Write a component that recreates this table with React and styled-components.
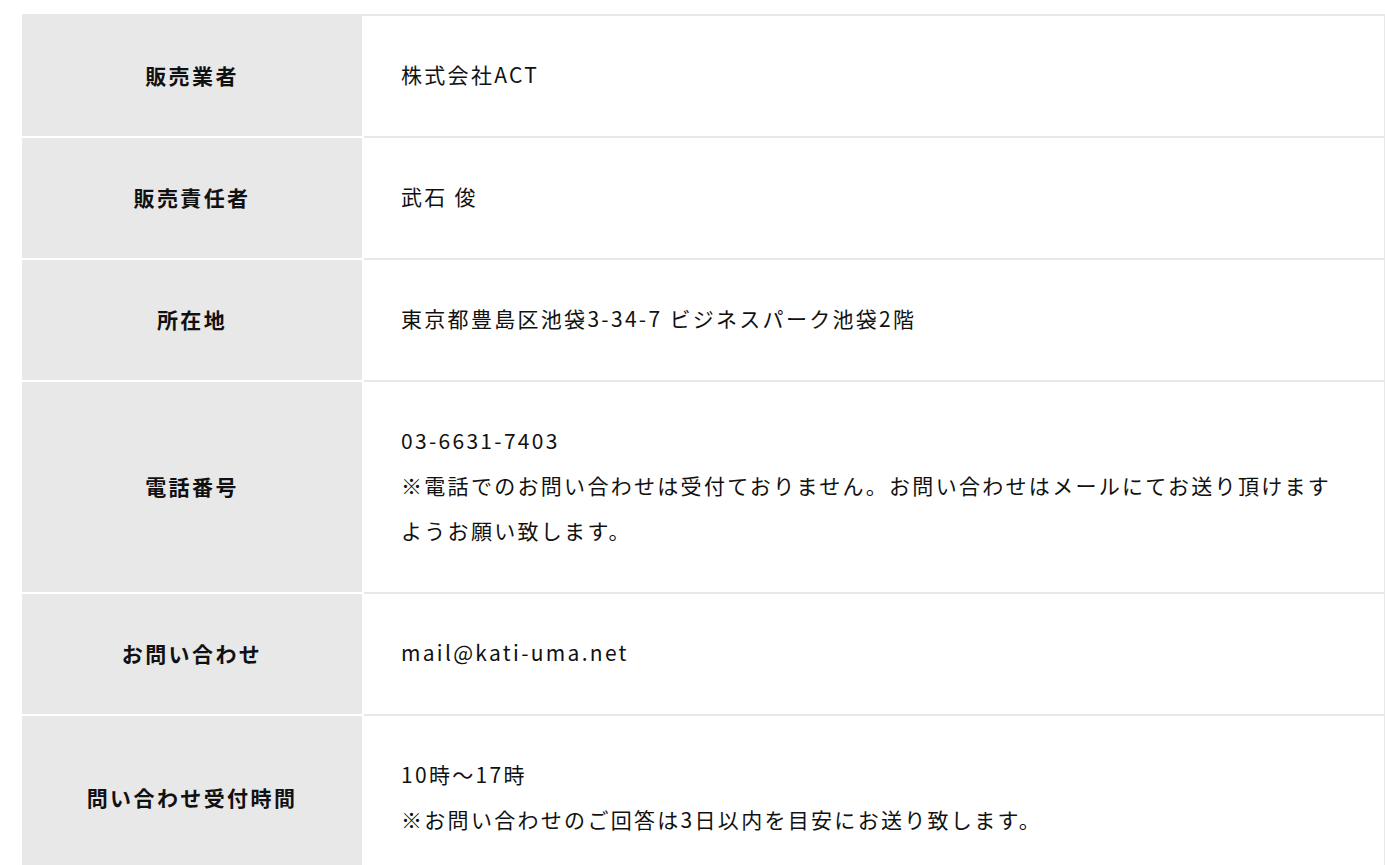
import React from 'react';
import styled, { createGlobalStyle } from 'styled-components';

const GlobalStyle = createGlobalStyle`
  html, body {
    margin: 0;
    padding: 0;
    background: #fff;
  }
  body {
    font-family: "Noto Sans CJK JP", "Noto Sans", sans-serif;
    color: #111;
  }
`;

const Page = styled.div`
  padding: 14px 0 0 22px;
`;

const Table = styled.div`
  width: 1363px;
  border-top: 2px solid #e8e8e8;
`;

const Row = styled.div`
  display: grid;
  grid-template-columns: 342px 1fr;
`;

const Head = styled.div`
  display: flex;
  align-items: center;
  justify-content: center;
  padding-bottom: 3px;
  background: #e8e8e8;
  border-right: 2px solid #fff;
  border-bottom: 2px solid #fff;
  font-size: 21px;
  font-weight: 700;
  letter-spacing: 2.4px;
  text-align: center;
`;

const Data = styled.div`
  padding: 36px 37px 39px;
  border-bottom: 2px solid #e8e8e8;
  border-right: 1px solid #e8e8e8;
  font-size: 21px;
  line-height: 45px;
  letter-spacing: 2.3px;
`;

const Line = styled.div``;

const rows = [
  { label: '販売業者', lines: ['株式会社ACT'] },
  { label: '販売責任者', lines: ['武石 俊'] },
  { label: '所在地', lines: ['東京都豊島区池袋3-34-7 ビジネスパーク池袋2階'] },
  {
    label: '電話番号',
    lines: [
      '03-6631-7403',
      '※電話でのお問い合わせは受付ておりません。お問い合わせはメールにてお送り頂けますようお願い致します。',
    ],
  },
  { label: 'お問い合わせ', lines: ['mail@kati-uma.net'] },
  {
    label: '問い合わせ受付時間',
    lines: ['10時～17時', '※お問い合わせのご回答は3日以内を目安にお送り致します。'],
  },
];

export default function App() {
  return (
    <>
      <GlobalStyle />
      <Page>
        <Table>
          {rows.map((r) => (
            <Row key={r.label}>
              <Head>{r.label}</Head>
              <Data>
                {r.lines.map((l) => (
                  <Line key={l}>{l}</Line>
                ))}
              </Data>
            </Row>
          ))}
        </Table>
      </Page>
    </>
  );
}
